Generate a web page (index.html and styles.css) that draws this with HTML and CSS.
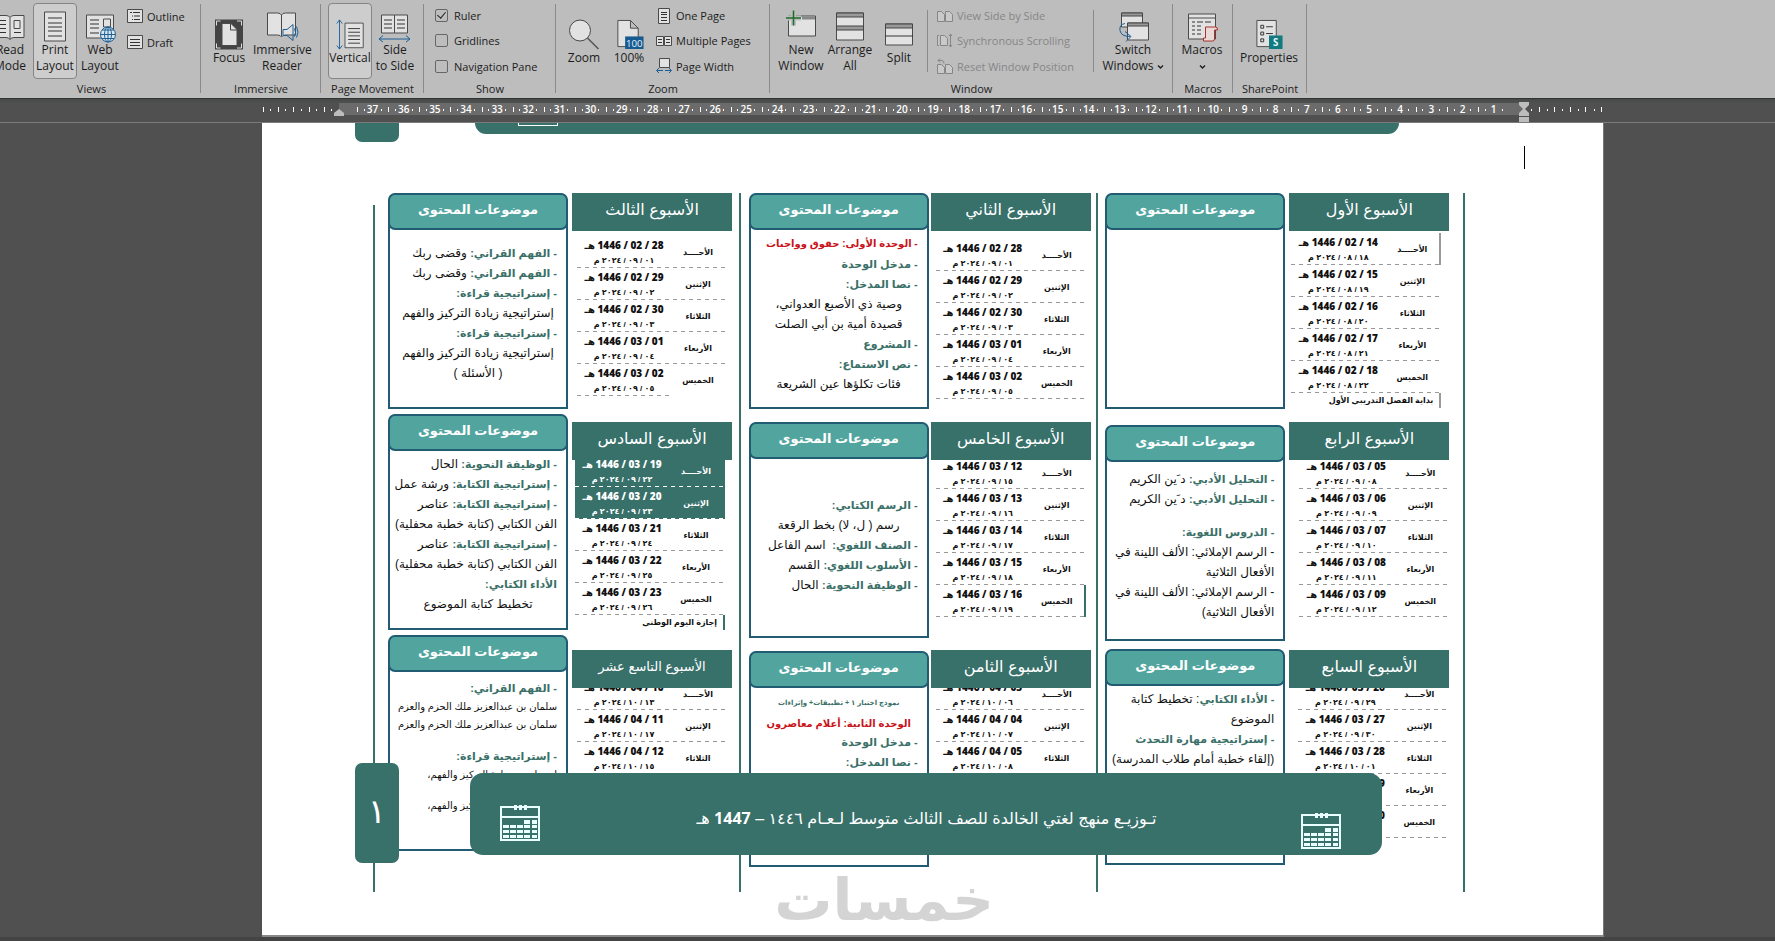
FILE: index.html
```html
<!DOCTYPE html>
<html lang="en">
<head>
  <meta charset="UTF-8">
  <meta name="viewport" content="width=device-width, initial-scale=1.0">
  <title>Word - View</title>
  <link rel="stylesheet" href="styles.css">
</head>
<body>
  <header class="ribbon">
    <section class="group views">
      <div class="tools">
        <button class="big">
          <svg width="30" height="30" viewBox="0 0 30 30"><path class="paper" d="M1 4h10q3 0 4 2q1-2 4-2h10v22h-10q-3 0-4 2q-1-2-4-2h-10z M15 6v22 M19 9h6v8h-6z"/><path class="ink" d="M4 9h7M4 13h7M4 17h7M4 21h7M19 21h7"/></svg>
          Read<br>Mode
        </button>
        <button class="big on">
          <svg width="30" height="30" viewBox="0 0 30 30"><path class="paper" d="M4.500.5h21v29h-21z"/><path class="ink" d="M8 6.500h14M8 11.500h14M8 15.500h14M8 19.500h14M8 24.500h14"/></svg>
          Print<br>Layout
        </button>
        <button class="big">
          <svg width="30" height="30" viewBox="0 0 30 30"><path class="paper" d="M1.500 3.500h27v23h-27z M18.500 7.500h7v8h-7z"/><path class="ink" d="M5 8.500h9M5 12.500h9M5 16.500h9M5 21.500h9"/><g class="blue"><circle cx="23" cy="23" r="7.500" fill="#d9e6ee"/><ellipse cx="23" cy="23" rx="3.500" ry="7.500"/><path d="M15.500 23h15M17 18.500h12M17 27h12M23 15v15"/></g></svg>
          Web<br>Layout
        </button>
        <div class="stack">
          <button class="small"><svg width="16" height="16" viewBox="0 0 16 16"><path class="paper" d="M.5 1.500h15v13h-15z"/><path class="ink" d="M3 4.500h2M6 4.500h7M5 8h1M7 8h6M5 11.500h1M7 11.500h6"/></svg>Outline</button>
          <button class="small"><svg width="16" height="16" viewBox="0 0 16 16"><path class="paper" d="M.5 1.500h15v13h-15z"/><path class="ink" d="M3 5.500h10M3 8.500h10M3 11.500h10"/></svg>Draft</button>
        </div>
      </div>
      <h2>Views</h2>
    </section>

    <section class="group immersive">
      <div class="tools">
        <button class="big">
          <svg width="30" height="30" viewBox="0 0 30 30"><path fill="#444" d="M1 0h28v30h-28z"/><path class="paper" stroke="none" d="M8 4h9l6 6v16h-15z"/><path fill="none" stroke="#444" d="M16.500 4v6.500h6.500"/><path fill="none" stroke="#ddd" d="M2.500 6v-4.500h4M23 1.500h4.500v4.500M2.500 24v4.500h4M23 28.500h4.500v-4.500"/></svg>
          Focus
        </button>
        <button class="big wide">
          <svg width="32" height="30" viewBox="0 0 32 30"><path class="paper" d="M1.500 1.500h10q3 0 4 2q1-2 4-2h10v22h-10q-3 0-4 2q-1-2-4-2h-10z M15.500 3.500v21"/><path class="blue" fill="#d9e6ee" d="M17 21v6h4l6 5v-16l-6 5z M28.500 20q2 4 0 8M30.500 18q3 6 0 11" transform="translate(0 -3)"/></svg>
          Immersive<br>Reader
        </button>
      </div>
      <h2>Immersive</h2>
    </section>

    <section class="group movement">
      <div class="tools">
        <button class="big on">
          <svg width="32" height="34" viewBox="0 0 32 34"><path class="paper" d="M10.500 4.500h20v27h-20z"/><path class="ink" d="M14 10.500h13M14 14.500h13M14 18.500h13M14 22.500h13M14 26.500h13"/><path class="blue" d="M4.500 1v32M1.500 5l3-4l3 4M1.500 29l3 4l3-4"/></svg>
          Vertical
        </button>
        <button class="big">
          <svg width="32" height="30" viewBox="0 0 32 30"><path class="paper" d="M2.500 3.500h13v18h-13z M15.500 3.500h13v18h-13z"/><path class="ink" d="M5 8.500h8M5 12.500h8M5 16.500h8M18 8.500h8M18 12.500h8M18 16.500h8"/><path class="blue" d="M0 27.500h31M4 24l-4 3.500l4 3M27 24l4 3.500l-4 3"/></svg>
          Side<br>to Side
        </button>
      </div>
      <h2>Page Movement</h2>
    </section>

    <section class="group show">
      <div class="tools">
        <div class="stack">
          <label class="small"><input type="checkbox" checked>Ruler</label>
          <label class="small"><input type="checkbox">Gridlines</label>
          <label class="small"><input type="checkbox">Navigation Pane</label>
        </div>
      </div>
      <h2>Show</h2>
    </section>

    <section class="group zoom">
      <div class="tools">
        <button class="big">
          <svg width="32" height="30" viewBox="0 0 32 30"><circle class="paper" cx="12" cy="11" r="10.500"/><path fill="none" stroke="#555" stroke-width="1.500" d="M19.500 18.500l11 11"/></svg>
          Zoom
        </button>
        <button class="big">
          <svg width="30" height="32" viewBox="0 0 30 32"><path class="paper" d="M3.500 1.500h13l8 8v19h-21z M16.500 1.500v8h8"/><path fill="#165a8f" d="M11 18h19v13h-19z"/><text x="20.500" y="28.500" text-anchor="middle" class="tag">100</text></svg>
          100%
        </button>
        <div class="stack">
          <button class="small"><svg width="16" height="16" viewBox="0 0 16 16"><path class="paper" d="M2.500.5h11v15h-11z"/><path class="ink" d="M5 4.500h6M5 6.500h6M5 9.500h6M5 12.500h6"/></svg>One Page</button>
          <button class="small"><svg width="16" height="16" viewBox="0 0 16 16"><path class="paper" d="M.5 3.500h7v9h-7z M8.500 3.500h7v9h-7z"/><path class="ink" d="M2 6.500h4M2 9.500h4M10 6.500h4M10 9.500h4"/></svg>Multiple Pages</button>
          <button class="small"><svg width="16" height="16" viewBox="0 0 16 16"><path class="paper" d="M3.500 9.500v-9h10v9z"/><path class="blue" d="M1 12.500h6M9 12.500h6M3 10l-2.500 2.500l2.500 2.500M13 10l2.500 2.500l-2.500 2.500"/></svg>Page Width</button>
        </div>
      </div>
      <h2>Zoom</h2>
    </section>

    <section class="group window">
      <div class="tools">
        <button class="big">
          <svg width="32" height="30" viewBox="0 0 32 30"><path class="paper" d="M3.500 4.500h27v20h-27z"/><path fill="#888" d="M17 5h13v3h-13z"/><path fill="none" stroke="#bdbdbd" stroke-width="5" d="M8.500 0v14M1 6.500h15"/><path fill="none" stroke="#1f6b2a" stroke-width="1.500" d="M8.500-1v15M1 6.500h15"/></svg>
          New<br>Window
        </button>
        <button class="big">
          <svg width="30" height="30" viewBox="0 0 30 30"><path class="paper" d="M1.500 1.500h27v27h-27z"/><path fill="#999" stroke="#444" d="M1.500 1.500h27v4h-27z M1.500 14.500h27v4h-27z"/></svg>
          Arrange<br>All
        </button>
        <button class="big">
          <svg width="30" height="30" viewBox="0 0 30 30"><path class="paper" d="M1.500 4.500h27v21h-27z"/><path fill="#999" stroke="#444" d="M1.500 4.500h27v4h-27z"/><path class="ink" d="M1 16.500h28"/></svg>
          Split
        </button>
        <div class="stack lined">
          <button class="small" disabled><svg width="16" height="16" viewBox="0 0 16 16"><path class="paper" d="M.5 3.500h4l3 3v7h-7z M8.500 3.500h4l3 3v7h-7z"/></svg>View Side by Side</button>
          <button class="small" disabled><svg width="16" height="16" viewBox="0 0 16 16"><path class="paper" d="M2 2.500h-1.500v10h1.500M3.500 2.500h4l3 3v7h-7z M13.500 1v13M12 3l1.500-2l1.500 2M12 12l1.500 2l1.500-2"/></svg>Synchronous Scrolling</button>
          <button class="small" disabled><svg width="16" height="16" viewBox="0 0 16 16"><path class="paper" d="M.5 6.500h4l3 3v6h-7z M8.500 6.500h4l3 3v6h-7z"/><path fill="none" stroke="#888" d="M1 2.500h4q2 0 2 3M3 .5l-2 2l2 2"/></svg>Reset Window Position</button>
        </div>
        <button class="big switch">
          <svg width="32" height="30" viewBox="0 0 32 30"><path class="paper" d="M4.500 1.500h21v14h-21z"/><path fill="#999" stroke="#444" d="M4.500 1.500h21v3h-21z"/><path class="paper" d="M10.500 11.500h21v17h-21z"/><path fill="#999" stroke="#444" d="M10.500 11.500h21v3h-21z"/><path class="blue" d="M8 12q-6 1-5 7q1 6 10 6M8 20l6 5l-5 5"/></svg>
          Switch<br>Windows <svg class="chev" width="7" height="6" viewBox="0 0 7 6"><path d="M1 1.500l2.500 2.500l2.500-2.500"/></svg>
        </button>
      </div>
      <h2>Window</h2>
    </section>

    <section class="group macros">
      <div class="tools">
        <button class="big">
          <svg width="30" height="30" viewBox="0 0 30 30"><path class="paper" d="M1.500 2.500h27v25h-27z M1.500 6.500h27"/><path class="ink" d="M5 10.500h3M10 10.500h6M18 10.500h6M5 14.500h3M10 14.500h4M5 18.500h3M10 18.500h4M5 22.500h3M10 22.500h4"/><path fill="#ead9d7" stroke="#a8322d" d="M18.500 15.500h10q2 0 2 3h-3v9q0 2-2 2h-9v-3h2z"/></svg>
          Macros<br><svg class="chev" width="7" height="6" viewBox="0 0 7 6"><path d="M1 1.500l2.500 2.500l2.500-2.500"/></svg>
        </button>
      </div>
      <h2>Macros</h2>
    </section>

    <section class="group share">
      <div class="tools">
        <button class="big wide">
          <svg width="30" height="32" viewBox="0 0 30 32"><path class="paper" d="M2.500 1.500h20v27h-20z"/><path class="ink" d="M6.500 6.500h3v3h-3zM6.500 13.500h3v3h-3zM6.500 20.500h3v3h-3zM12 8h7M12 15h7"/><path fill="#127b80" d="M15 17h14v14h-14z"/><text x="22" y="28" text-anchor="middle" class="tag bold">S</text></svg>
          Properties
        </button>
      </div>
      <h2>SharePoint</h2>
    </section>
  </header>

  <div class="ruler">
    <div class="margin left"><i></i><i></i><i></i><i></i><i></i></div>
    <div class="measure" id="measure"></div>
    <div class="margin"><i></i><i></i><i></i><i></i><i></i></div>
    <svg class="stop start" width="12" height="20" viewBox="0 0 12 20"><path d="M1 0h10v3l-4 4h-2l-4-4z M1 14v-3l4-4h2l4 4v3z M1 15h10v5h-10z"/></svg>
    <svg class="stop end" width="12" height="8" viewBox="0 0 12 8"><path d="M1 7v-3l5-4l5 4v3z"/></svg>
  </div>

  <main class="canvas">
    <article class="page" dir="rtl" lang="ar">
      <div class="band top"><span class="calfoot"></span></div>
      <div class="tab top"></div>
      <span class="caret"></span>

      <div class="plan">
        <!-- weeks 1, 4, 7 -->
        <section class="column first">
          <div class="weeks">
            <div class="week">
              <h3>الأسبوع الأول</h3>
              <table class="days w1">
                <tr class="mark"><th>الأحــــد</th><td><b>14 / 02 / 1446 هـ</b>١٨ / ٠٨ / ٢٠٢٤ م</td></tr>
                <tr><th>الإثنين</th><td><b>15 / 02 / 1446 هـ</b>١٩ / ٠٨ / ٢٠٢٤ م</td></tr>
                <tr><th>الثلاثاء</th><td><b>16 / 02 / 1446 هـ</b>٢٠ / ٠٨ / ٢٠٢٤ م</td></tr>
                <tr><th>الأربعاء</th><td><b>17 / 02 / 1446 هـ</b>٢١ / ٠٨ / ٢٠٢٤ م</td></tr>
                <tr><th>الخميس</th><td><b>18 / 02 / 1446 هـ</b>٢٢ / ٠٨ / ٢٠٢٤ م</td></tr>
                <tr class="note mark"><td colspan="2">بداية الفصل التدريبي الأول</td></tr>
              </table>
            </div>
            <div class="week">
              <h3>الأسبوع الرابع</h3>
              <table class="days w4">
                <tr><th>الأحــــد</th><td><b>05 / 03 / 1446 هـ</b>٠٨ / ٠٩ / ٢٠٢٤ م</td></tr>
                <tr><th>الإثنين</th><td><b>06 / 03 / 1446 هـ</b>٠٩ / ٠٩ / ٢٠٢٤ م</td></tr>
                <tr><th>الثلاثاء</th><td><b>07 / 03 / 1446 هـ</b>١٠ / ٠٩ / ٢٠٢٤ م</td></tr>
                <tr><th>الأربعاء</th><td><b>08 / 03 / 1446 هـ</b>١١ / ٠٩ / ٢٠٢٤ م</td></tr>
                <tr><th>الخميس</th><td><b>09 / 03 / 1446 هـ</b>١٢ / ٠٩ / ٢٠٢٤ م</td></tr>
              </table>
            </div>
            <div class="week">
              <h3>الأسبوع السابع</h3>
              <table class="days w7">
                <tr><th>الأحــــد</th><td><b>26 / 03 / 1446 هـ</b>٢٩ / ٠٩ / ٢٠٢٤ م</td></tr>
                <tr><th>الإثنين</th><td><b>27 / 03 / 1446 هـ</b>٣٠ / ٠٩ / ٢٠٢٤ م</td></tr>
                <tr><th>الثلاثاء</th><td><b>28 / 03 / 1446 هـ</b>٠١ / ١٠ / ٢٠٢٤ م</td></tr>
                <tr><th>الأربعاء</th><td><b>29 / 03 / 1446 هـ</b>٠٢ / ١٠ / ٢٠٢٤ م</td></tr>
                <tr><th>الخميس</th><td><b>30 / 03 / 1446 هـ</b>٠٣ / ١٠ / ٢٠٢٤ م</td></tr>
              </table>
            </div>
          </div>
          <div class="boxes">
            <div class="topics">
              <h4>موضوعات المحتوى</h4>
            </div>
            <div class="topics low">
              <h4>موضوعات المحتوى</h4>
              <p><b>- التحليل الأدبي:</b> د َين الكريم</p>
              <p><b>- التحليل الأدبي:</b> د َين الكريم</p>
              <p class="gap"><b>- الدروس اللغوية:</b></p>
              <p>- الرسم الإملائي: الألف اللينة في<br>الأفعال الثلاثية</p>
              <p>- الرسم الإملائي: الألف اللينة في<br>الأفعال الثلاثية)</p>
            </div>
            <div class="topics">
              <h4>موضوعات المحتوى</h4>
              <p class="tight"><b>- الأداء الكتابي</b>: تخطيط كتابة<br>الموضوع</p>
              <p><b>- إستراتيجية مهارة التحدث</b></p>
              <p>(إلقاء خطبة أمام طلاب المدرسة)</p>
            </div>
          </div>
        </section>

        <!-- weeks 2, 5, 8 -->
        <section class="column second">
          <div class="weeks">
            <div class="week">
              <h3>الأسبوع الثاني</h3>
              <table class="days w2">
                <tr><th>الأحــــد</th><td><b>28 / 02 / 1446 هـ</b>٠١ / ٠٩ / ٢٠٢٤ م</td></tr>
                <tr><th>الإثنين</th><td><b>29 / 02 / 1446 هـ</b>٠٢ / ٠٩ / ٢٠٢٤ م</td></tr>
                <tr><th>الثلاثاء</th><td><b>30 / 02 / 1446 هـ</b>٠٣ / ٠٩ / ٢٠٢٤ م</td></tr>
                <tr><th>الأربعاء</th><td><b>01 / 03 / 1446 هـ</b>٠٤ / ٠٩ / ٢٠٢٤ م</td></tr>
                <tr><th>الخميس</th><td><b>02 / 03 / 1446 هـ</b>٠٥ / ٠٩ / ٢٠٢٤ م</td></tr>
              </table>
            </div>
            <div class="week">
              <h3>الأسبوع الخامس</h3>
              <table class="days w5">
                <tr><th>الأحــــد</th><td><b>12 / 03 / 1446 هـ</b>١٥ / ٠٩ / ٢٠٢٤ م</td></tr>
                <tr><th>الإثنين</th><td><b>13 / 03 / 1446 هـ</b>١٦ / ٠٩ / ٢٠٢٤ م</td></tr>
                <tr><th>الثلاثاء</th><td><b>14 / 03 / 1446 هـ</b>١٧ / ٠٩ / ٢٠٢٤ م</td></tr>
                <tr><th>الأربعاء</th><td><b>15 / 03 / 1446 هـ</b>١٨ / ٠٩ / ٢٠٢٤ م</td></tr>
                <tr class="mark green"><th>الخميس</th><td><b>16 / 03 / 1446 هـ</b>١٩ / ٠٩ / ٢٠٢٤ م</td></tr>
              </table>
            </div>
            <div class="week">
              <h3>الأسبوع الثامن</h3>
              <table class="days w8">
                <tr><th>الأحــــد</th><td><b>03 / 04 / 1446 هـ</b>٠٦ / ١٠ / ٢٠٢٤ م</td></tr>
                <tr><th>الإثنين</th><td><b>04 / 04 / 1446 هـ</b>٠٧ / ١٠ / ٢٠٢٤ م</td></tr>
                <tr><th>الثلاثاء</th><td><b>05 / 04 / 1446 هـ</b>٠٨ / ١٠ / ٢٠٢٤ م</td></tr>
              </table>
            </div>
          </div>
          <div class="boxes">
            <div class="topics">
              <h4>موضوعات المحتوى</h4>
              <p class="tight"><b class="red">- الوحدة الأولى: حقوق وواجبات</b></p>
              <p><b>- مدخل الوحدة</b></p>
              <p><b>- نصا المدخل:</b></p>
              <p class="mid">وصية ذي الأصبع العدواني،</p>
              <p class="mid">قصيدة أمية بن أبي الصلت</p>
              <p><b>- المشروع</b></p>
              <p><b>- نص الاستماع:</b></p>
              <p class="mid">فئات تكلؤها عين الشريعة</p>
            </div>
            <div class="topics centered">
              <h4>موضوعات المحتوى</h4>
              <p><b>- الرسم الكتابي:</b></p>
              <p class="mid">رسم ( ل، لا) بخط الرقعة</p>
              <p><b>- الصنف اللغوي:</b>&nbsp; اسم الفاعل</p>
              <p><b>- الأسلوب اللغوي:</b> القسم</p>
              <p><b>- الوظيفة النحوية:</b> الحال</p>
            </div>
            <div class="topics">
              <h4>موضوعات المحتوى</h4>
              <p class="tiny mid"><b>نموذج اختبار ١ + تطبيقات+ وإثراءات</b></p>
              <p class="near mid"><b class="red">الوحدة الثانية: أعلام معاصرون</b></p>
              <p><b>- مدخل الوحدة</b></p>
              <p><b>- نصا المدخل:</b></p>
            </div>
          </div>
        </section>

        <!-- weeks 3, 6, 19 -->
        <section class="column third">
          <div class="weeks">
            <div class="week">
              <h3>الأسبوع الثالث</h3>
              <table class="days w3">
                <tr><th>الأحــــد</th><td><b>28 / 02 / 1446 هـ</b>٠١ / ٠٩ / ٢٠٢٤ م</td></tr>
                <tr><th>الإثنين</th><td><b>29 / 02 / 1446 هـ</b>٠٢ / ٠٩ / ٢٠٢٤ م</td></tr>
                <tr><th>الثلاثاء</th><td><b>30 / 02 / 1446 هـ</b>٠٣ / ٠٩ / ٢٠٢٤ م</td></tr>
                <tr><th>الأربعاء</th><td><b>01 / 03 / 1446 هـ</b>٠٤ / ٠٩ / ٢٠٢٤ م</td></tr>
                <tr class="part"><th>الخميس</th><td><b>02 / 03 / 1446 هـ</b>٠٥ / ٠٩ / ٢٠٢٤ م</td></tr>
              </table>
            </div>
            <div class="week">
              <h3>الأسبوع السادس</h3>
              <table class="days w6">
                <tr class="off"><th>الأحــــد</th><td><b>19 / 03 / 1446 هـ</b>٢٢ / ٠٩ / ٢٠٢٤ م</td></tr>
                <tr class="off"><th>الإثنين</th><td><b>20 / 03 / 1446 هـ</b>٢٣ / ٠٩ / ٢٠٢٤ م</td></tr>
                <tr><th>الثلاثاء</th><td><b>21 / 03 / 1446 هـ</b>٢٤ / ٠٩ / ٢٠٢٤ م</td></tr>
                <tr><th>الأربعاء</th><td><b>22 / 03 / 1446 هـ</b>٢٥ / ٠٩ / ٢٠٢٤ م</td></tr>
                <tr><th>الخميس</th><td><b>23 / 03 / 1446 هـ</b>٢٦ / ٠٩ / ٢٠٢٤ م</td></tr>
                <tr class="note mark green"><td colspan="2">إجازة اليوم الوطني</td></tr>
              </table>
            </div>
            <div class="week">
              <h3 class="long">الأسبوع التاسع عشر</h3>
              <table class="days w19">
                <tr><th>الأحــــد</th><td><b>10 / 04 / 1446 هـ</b>١٣ / ١٠ / ٢٠٢٤ م</td></tr>
                <tr><th>الإثنين</th><td><b>11 / 04 / 1446 هـ</b>١٧ / ١٠ / ٢٠٢٤ م</td></tr>
                <tr><th>الثلاثاء</th><td><b>12 / 04 / 1446 هـ</b>١٥ / ١٠ / ٢٠٢٤ م</td></tr>
              </table>
            </div>
          </div>
          <div class="boxes">
            <div class="topics">
              <h4>موضوعات المحتوى</h4>
              <p class="gap"><b>- الفهم القراني:</b> وقضى ربك</p>
              <p><b>- الفهم القراني:</b> وقضى ربك</p>
              <p><b>- إستراتيجية قراءة:</b></p>
              <p class="mid">إستراتيجية زيادة التركيز والفهم</p>
              <p><b>- إستراتيجية قراءة:</b></p>
              <p class="mid">إستراتيجية زيادة التركيز والفهم</p>
              <p class="mid">( الأسئلة )</p>
            </div>
            <div class="topics">
              <h4>موضوعات المحتوى</h4>
              <p class="tight"><b>- الوظيفة النحوية:</b> الحال</p>
              <p><b>- إستراتيجية الكتابة:</b> ورشة عمل</p>
              <p><b>- إستراتيجية الكتابة:</b> عناصر<br>الفن الكتابي (كتابة خطبة محفلية)</p>
              <p><b>- إستراتيجية الكتابة:</b> عناصر<br>الفن الكتابي (كتابة خطبة محفلية)</p>
              <p><b>الأداء الكتابي:</b></p>
              <p class="mid">تخطيط كتابة الموضوع</p>
            </div>
            <div class="topics dense">
              <h4>موضوعات المحتوى</h4>
              <p><b>- الفهم القراني:</b></p>
              <p>سلمان بن عبدالعزيز ملك الحزم والعزم</p>
              <p>سلمان بن عبدالعزيز ملك الحزم والعزم</p>
              <p class="gap"><b>- إستراتيجية قراءة:</b></p>
              <p>إستراتيجية زيادة التركيز والفهم،</p>
              <p class="gap">إستراتيجية زيادة التركيز والفهم،</p>
            </div>
          </div>
        </section>
      </div>

      <div class="logo">خمسات</div>

      <div class="tab foot">١</div>
      <footer class="band foot">
        <svg class="cal low" width="40" height="36" viewBox="0 0 40 36"><path fill="none" stroke="#eaffff" stroke-width="2" d="M1 2h38v33h-38z M1 12h38"/><path fill="#eaffff" d="M14 0h3v5h-3zM19 0h3v5h-3zM24 0h3v5h-3zM24 15h6v4h-6zM32 15h5v4h-5zM3 20h6v3h-6zM10 20h6v3h-6zM17 20h6v3h-6zM24 20h6v3h-6zM32 20h5v3h-5zM3 25h6v3h-6zM10 25h6v3h-6zM17 25h6v3h-6zM24 25h6v3h-6zM32 25h5v3h-5zM3 30h6v3h-6zM10 30h6v3h-6zM17 30h6v3h-6zM24 30h6v3h-6zM32 30h5v3h-5z"/></svg>
        <p>تـوزيـع منهج لغتي الخالدة للصف الثالث متوسط لـعـام ١٤٤٦ – <b>1447</b> هـ</p>
        <svg class="cal" width="40" height="36" viewBox="0 0 40 36"><path fill="none" stroke="#eaffff" stroke-width="2" d="M1 2h38v33h-38z M1 12h38"/><path fill="#eaffff" d="M14 0h3v5h-3zM19 0h3v5h-3zM24 0h3v5h-3zM24 15h6v4h-6zM32 15h5v4h-5zM3 20h6v3h-6zM10 20h6v3h-6zM17 20h6v3h-6zM24 20h6v3h-6zM32 20h5v3h-5zM3 25h6v3h-6zM10 25h6v3h-6zM17 25h6v3h-6zM24 25h6v3h-6zM32 25h5v3h-5zM3 30h6v3h-6zM10 30h6v3h-6zM17 30h6v3h-6zM24 30h6v3h-6zM32 30h5v3h-5z"/></svg>
      </footer>
    </article>
  </main>

  <script>
    // ruler numbers, from the left edge down to 1
    var measure = document.getElementById('measure');
    for (var i = 37; i > 0; i--) {
      var cell = document.createElement('span');
      cell.innerHTML = i;
      measure.appendChild(cell);
    }
  </script>
</body>
</html>
```

FILE: styles.css
```css
* {
  margin: 0;
  padding: 0;
  box-sizing: border-box;
}
body {
  min-height: 100vh;
  display: flex;
  flex-direction: column;
  overflow: hidden;
  background: #505050;
  font-family: "Open Sans", "Noto Sans", sans-serif;
}

/* ribbon */
.ribbon {
  display: flex;
  height: 99px;
  background: #bdbdbd;
  border-bottom: 1px solid #2e3532;
  color: #1c1c1c;
  overflow: hidden;
}
.group {
  position: relative;
  flex: none;
  padding: 3px 0 0;
}
.group::after {
  content: "";
  position: absolute;
  right: 0;
  top: 4px;
  bottom: 5px;
  width: 1px;
  background: #8a8a8a;
}
.group h2 {
  font-size: 11px;
  font-weight: normal;
  line-height: 16px;
  margin-top: 2px;
  text-align: center;
  white-space: nowrap;
}
.tools {
  display: flex;
  height: 76px;
  gap: 1px;
}
.views { width: 219px; margin-left: -18px; }
.immersive { width: 120px; }
.movement { width: 103px; }
.show { width: 132px; }
.zoom { width: 214px; }
.window { width: 403px; }
.macros { width: 60px; }
.share { width: 74px; }
.views .tools,
.immersive .tools,
.zoom .tools { padding-left: 6px; }
.movement .tools,
.window .tools,
.macros .tools { padding-left: 7px; }
.share .tools { padding-left: 6px; }
.show .tools { padding-left: 11px; }

button {
  border: 1px solid transparent;
  background: none;
  color: inherit;
  font-family: inherit;
}
.big {
  display: block;
  width: 44px;
  height: 76px;
  padding-top: 3px;
  border-radius: 4px;
  font-size: 12px;
  line-height: 16px;
  text-align: center;
  white-space: nowrap;
}
.big > svg:first-child {
  display: block;
  height: 31px;
  margin: 0 auto;
  overflow: visible;
}
.big.wide { width: 60px; }
.big.on {
  background: #cdcdcd;
  border-color: #858585;
}
.window .big { width: 48px; }
.window .switch { width: 76px; }
.stack {
  display: flex;
  flex-direction: column;
  padding-left: 3px;
}
.small {
  display: flex;
  align-items: center;
  gap: 4px;
  height: 26px;
  font-size: 11px;
  white-space: nowrap;
  text-align: left;
}
.small svg { overflow: visible; }
.stack.lined {
  width: 167px;
  margin-left: 3px;
  padding-left: 9px;
  background: linear-gradient(#8a8a8a, #8a8a8a) 0 7px / 1px 62px no-repeat, linear-gradient(#8a8a8a, #8a8a8a) 100% 7px / 1px 62px no-repeat;
}
.small:disabled { color: #868686; }
.small:disabled .paper { stroke: #868686; fill: #c9c9c9; }
.show .stack { padding-left: 0; }
.show .small { gap: 6px; }
input[type="checkbox"] {
  appearance: none;
  width: 13px;
  height: 13px;
  border: 1px solid #666;
  border-radius: 2px;
}
input[type="checkbox"]:checked::after {
  content: "";
  display: block;
  width: 4px;
  height: 7px;
  margin: 0 auto;
  border: solid #222;
  border-width: 0 1px 1px 0;
  transform: rotate(40deg);
}
.paper { fill: #e2e2e2; stroke: #4a4a4a; }
.ink { fill: none; stroke: #333; }
.blue { fill: none; stroke: #1c5f95; }
.tag { font-size: 10px; fill: #e6f4ff; }
.tag.bold { font-weight: bold; }
.chev path { fill: none; stroke: #222; stroke-width: 1.5; }

/* ruler */
.ruler {
  position: relative;
  display: flex;
  height: 24px;
  padding: 4px 173px 7px 263px;
  background: linear-gradient(#484848, #505050 4px);
  border-bottom: 1px solid #7a7a7a;
  color: #fff;
}
.measure {
  flex: 1;
  display: flex;
  padding: 0 15px 0 18px;
  background: #6b6b6b;
}
.measure span {
  flex: 1;
  text-align: center;
  font-size: 10px;
  font-weight: 600;
  line-height: 12px;
  background:
    linear-gradient(#fff, #fff) 0 4px / 1px 5px no-repeat,
    linear-gradient(#fff, #fff) 22% 6px / 1px 2px no-repeat,
    linear-gradient(#fff, #fff) 78% 6px / 1px 2px no-repeat;
}
.margin {
  display: flex;
  width: 78px;
}
.margin.left { width: 76px; }
.margin i {
  flex: 1;
  background:
    linear-gradient(#fff, #fff) 100% 4px / 1px 5px no-repeat,
    linear-gradient(#fff, #fff) 50% 6px / 1px 2px no-repeat;
}
.margin.left i { background-position: 0 4px, 50% 6px; }
.stop {
  position: absolute;
  fill: #bdbdbd;
}
.stop.start { right: 245px; top: 3px; }
.stop.end { left: 333px; top: 10px; }

/* document */
.canvas {
  flex: 1;
  display: flex;
  padding: 0 171px 0 262px;
  border-bottom: 4px solid #444;
}
.page {
  position: relative;
  flex: 1;
  background: #fff;
  border-right: 1px solid #777;
  border-bottom: 2px solid #888;
  padding: 70px 138px 20px 111px;
  overflow: hidden;
  font-family: "Liberation Sans", "DejaVu Sans", sans-serif;
  color: #111;
}
.plan {
  display: grid;
  grid-template-columns: 367fr 358fr 366fr;
  height: 699px;
  border-right: 2px solid #38706a;
}
.column {
  display: flex;
  justify-content: flex-end;
  gap: 4px;
  padding-left: 7px;
  border-left: 2px solid #38706a;
}
.column.second {
  gap: 2px;
  padding-left: 8px;
}
.column.third {
  padding-left: 13px;
  border-left-color: transparent;
  background: linear-gradient(#38706a, #38706a) 0 12px / 2px 100% no-repeat border-box;
}
.weeks {
  display: grid;
  grid-template-columns: 160px;
  grid-template-rows: 229px 228px 200px;
}
.week h3 {
  position: relative;
  height: 38px;
  line-height: 34px;
  background: #38706a;
  color: #fff;
  font-size: 16px;
  font-weight: normal;
  text-align: center;
}
.week h3.long { font-size: 13px; }
.days {
  border-spacing: 0;
  width: 150px;
  margin: 2px auto 0 5px;
  table-layout: fixed;
}
.days tr {
  background: repeating-linear-gradient(90deg, #999 0 4px, transparent 4px 8px) 0 100% / 100% 1px no-repeat;
}
.days th {
  width: 56px;
  border-right: 2px solid transparent;
  font-size: 8px;
}
.days td {
  height: 32px;
  font-size: 8px;
  font-weight: bold;
  line-height: 15px;
  text-align: center;
}
.days td b {
  display: block;
  font-family: "Open Sans", "DejaVu Sans", sans-serif;
  font-size: 10px;
  line-height: 16px;
}
.days .mark > :first-child { border-right: 2px solid #999; }
.days .green > :first-child { border-right-color: #38706a; }
.days .part { background-size: 96px 1px; }
.days .note { background: none; }
.days .note td {
  height: 15px;
  padding-right: 6px;
  font-size: 8px;
  text-align: right;
}
.days .off {
  background: repeating-linear-gradient(90deg, #fff 0 4px, transparent 4px 8px) 0 100% / 100% 1px no-repeat, #38706a;
  color: #fff;
}
.w1 { margin-left: 2px; }
.w2 { margin-top: 8px; }
.w3 { margin-top: 5px; }
.w4 { margin-top: -3px; margin-left: 15px; }
.w5 { margin-top: -3px; }
.w6 { margin-top: -5px; margin-left: 3px; }
.w7, .w8, .w19 { margin-top: -10px; }
.w7 { margin-left: 9px; }

.boxes {
  display: flex;
  flex-direction: column;
  gap: 8px;
}
.second .boxes { gap: 13px; }
.third .boxes { gap: 5px; }
.topics {
  width: 180px;
  height: 216px;
  border: 2px solid #215c73;
  border-top: 0;
  border-radius: 9px 9px 0 0;
  padding: 0 9px;
}
.topics.low { margin: 8px 0 0; }
.topics h4 {
  height: 37px;
  margin: 0 -11px 7px;
  border: 2px solid #215c73;
  border-radius: 7px;
  background: #52a59f;
  color: #fff;
  font-size: 13px;
  line-height: 30px;
  text-align: center;
}
.topics p {
  font-size: 12px;
  line-height: 20px;
  white-space: nowrap;
}
.topics b {
  color: #3a7068;
  font-size: 11px;
}
.topics b.red {
  color: #c8141a;
  font-size: 10px;
}
.topics .mid { text-align: center; }
.topics .gap { margin-top: 13px; }
.topics .tight { margin-top: -4px; }
.topics .tiny { line-height: 12px; }
.topics .tiny b { font-size: 7px; }
.topics .near {
  margin-top: 6px;
  line-height: 16px;
}
.topics.centered h4 { margin-bottom: 36px; }
.topics.dense p {
  font-size: 10px;
  line-height: 18px;
}

.band {
  position: absolute;
  background: #38706a;
  color: #fff;
}
.band.top {
  top: 0;
  left: 213px;
  right: 204px;
  height: 11px;
  border-radius: 0 0 13px 13px;
}
.calfoot {
  display: block;
  width: 40px;
  height: 3px;
  margin: 0 auto 0 43px;
  border: 1px solid #fff;
  border-top: 0;
}
.band.foot {
  left: 208px;
  right: 221px;
  bottom: 80px;
  height: 82px;
  border-radius: 13px;
  display: flex;
  align-items: center;
  justify-content: space-between;
  padding: 8px 41px 0 30px;
  font-size: 16px;
}
.band p { margin-left: 12px; }
.cal { margin-top: 9px; }
.cal.low { margin-top: 25px; }
.band b { font-family: "Open Sans", sans-serif; }
.tab {
  position: absolute;
  left: 93px;
  width: 44px;
  border-radius: 7px;
  background: #38706a;
  color: #fff;
  text-align: center;
}
.tab.top {
  top: 0;
  height: 19px;
  border-radius: 0 0 7px 7px;
}
.tab.foot {
  bottom: 72px;
  height: 100px;
  line-height: 96px;
  font-size: 34px;
}
.caret {
  position: absolute;
  top: 23px;
  right: 78px;
  width: 1px;
  height: 23px;
  background: #000;
}
.logo {
  position: absolute;
  left: 519px;
  bottom: 0;
  width: 213px;
  color: #d4d4d4;
  font-size: 58px;
  font-weight: bold;
  line-height: 70px;
  text-align: center;
}
```
